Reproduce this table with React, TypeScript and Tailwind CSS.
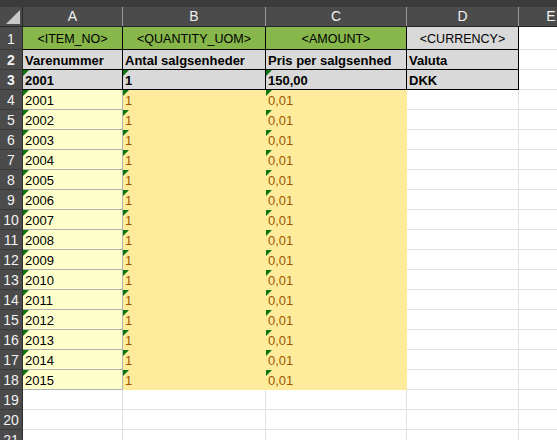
import React from 'react';

const font = { fontFamily: '"Liberation Sans", Arial, sans-serif' };

// green "number stored as text" marker
function Tri() {
  return (
    <span className="absolute left-0 top-0 h-0 w-0 border-t-[6px] border-r-[6px] border-t-[#0c740c] border-r-transparent" />
  );
}

function RowHead({ n, h }: { n: number; h: string }) {
  return (
    <div
      className={`${h} w-[23px] shrink-0 flex items-center justify-center pt-[2px] bg-[#4b4b4b] border-r border-b border-r-[#2e2e2e] border-b-[#3a3a3a] text-[14px] text-[#f2f2f2]`}
    >
      {n}
    </div>
  );
}

const items = Array.from({ length: 15 }, (_, i) => String(2001 + i));

export default function App() {
  return (
    <div className="w-[557px] h-[440px] overflow-hidden bg-white text-[13px] text-black" style={font}>
      <div className="h-[7px] bg-[#3b3b3b]" />
      {/* column header */}
      <div className="flex h-[20px] bg-[#4b4b4b] border-b border-[#262626] text-[14px] text-[#f2f2f2]">
        <div className="w-[23px] shrink-0 flex items-end justify-end pr-[2px] pb-[2px] border-r border-[#262626]">
          <svg width="14" height="14" viewBox="0 0 14 14">
            <polygon points="14,0 14,14 0,14" fill="#c8c8c8" />
          </svg>
        </div>
        <div className="w-[100px] shrink-0 flex items-center justify-center border-r border-[#9a9a9a]">A</div>
        <div className="w-[143px] shrink-0 flex items-center justify-center border-r border-[#9a9a9a]">B</div>
        <div className="w-[141px] shrink-0 flex items-center justify-center border-r border-[#9a9a9a]">C</div>
        <div className="w-[112px] shrink-0 flex items-center justify-center border-r border-[#9a9a9a]">D</div>
        <div className="w-[64px] shrink-0 flex items-center justify-center">E</div>
      </div>

      {/* row 1 */}
      <div className="flex h-[23px] text-[12.5px]">
        <RowHead n={1} h="h-[23px]" />
        <div className="w-[100px] shrink-0 flex items-center justify-center pt-[2px] bg-[#87b64b] border-r border-b border-black">&lt;ITEM_NO&gt;</div>
        <div className="w-[143px] shrink-0 flex items-center justify-center pt-[2px] bg-[#87b64b] border-r border-b border-black">&lt;QUANTITY_UOM&gt;</div>
        <div className="w-[141px] shrink-0 flex items-center justify-center pt-[2px] bg-[#87b64b] border-r border-b border-black">&lt;AMOUNT&gt;</div>
        <div className="w-[112px] shrink-0 flex items-center justify-center pt-[2px] bg-[#d9d9d9] border-r border-b border-black">&lt;CURRENCY&gt;</div>
        <div className="w-[64px] shrink-0 border-b border-[#e1e1e1]" />
      </div>

      {/* row 2 */}
      <div className="flex h-[20px] font-bold">
        <RowHead n={2} h="h-[20px]" />
        <div className="w-[100px] shrink-0 flex items-center pl-[2px] pt-[2px] bg-[#d9d9d9] border-r border-b border-black">Varenummer</div>
        <div className="w-[143px] shrink-0 flex items-center pl-[2px] pt-[2px] bg-[#d9d9d9] border-r border-b border-black">Antal salgsenheder</div>
        <div className="w-[141px] shrink-0 flex items-center pl-[2px] pt-[2px] bg-[#d9d9d9] border-r border-b border-black">Pris per salgsenhed</div>
        <div className="w-[112px] shrink-0 flex items-center pl-[2px] pt-[2px] bg-[#d9d9d9] border-r border-b border-black">Valuta</div>
        <div className="w-[64px] shrink-0 border-b border-[#e1e1e1]" />
      </div>

      {/* row 3 */}
      <div className="flex h-[20px] font-bold">
        <RowHead n={3} h="h-[20px]" />
        <div className="relative w-[100px] shrink-0 flex items-center pl-[2px] pt-[2px] bg-[#d9d9d9] border-r border-b border-black"><Tri />2001</div>
        <div className="relative w-[143px] shrink-0 flex items-center pl-[2px] pt-[2px] bg-[#d9d9d9] border-r border-b border-black"><Tri />1</div>
        <div className="relative w-[141px] shrink-0 flex items-center pl-[2px] pt-[2px] bg-[#d9d9d9] border-r border-b border-black"><Tri />150,00</div>
        <div className="w-[112px] shrink-0 flex items-center pl-[2px] pt-[2px] bg-[#d9d9d9] border-r border-b border-black">DKK</div>
        <div className="w-[64px] shrink-0 border-b border-[#e1e1e1]" />
      </div>

      {/* rows 4-18 */}
      {items.map((item, i) => (
        <div key={item} className="flex h-[20px]">
          <RowHead n={i + 4} h="h-[20px]" />
          <div className="relative w-[100px] shrink-0 flex items-center pl-[2px] pt-[2px] bg-[#ffffcc] border-r border-b border-[#b2b2b2]">
            <Tri />
            {item}
          </div>
          <div className="relative w-[143px] shrink-0 flex items-center pl-[2px] pt-[2px] bg-[#ffeb9c] text-[#9c5700]">
            <Tri />1
          </div>
          <div className="relative w-[141px] shrink-0 flex items-center pl-[2px] pt-[2px] bg-[#ffeb9c] text-[#9c5700]">
            <Tri />0,01
          </div>
          <div className="w-[112px] shrink-0 border-r border-b border-[#e1e1e1]" />
          <div className="w-[64px] shrink-0 border-b border-[#e1e1e1]" />
        </div>
      ))}

      {/* empty rows */}
      {[19, 20, 21].map((n) => (
        <div key={n} className="flex h-[20px]">
          <RowHead n={n} h="h-[20px]" />
          <div className="w-[100px] shrink-0 border-r border-b border-[#e1e1e1]" />
          <div className="w-[143px] shrink-0 border-r border-b border-[#e1e1e1]" />
          <div className="w-[141px] shrink-0 border-r border-b border-[#e1e1e1]" />
          <div className="w-[112px] shrink-0 border-r border-b border-[#e1e1e1]" />
          <div className="w-[64px] shrink-0 border-b border-[#e1e1e1]" />
        </div>
      ))}
    </div>
  );
}
